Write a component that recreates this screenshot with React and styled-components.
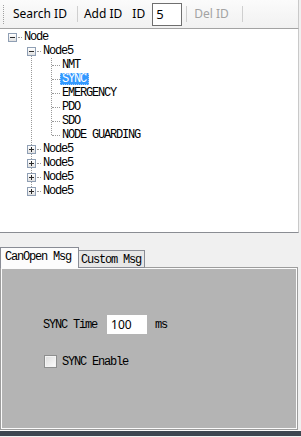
import React from 'react';
import styled, { createGlobalStyle } from 'styled-components';

const GlobalStyle = createGlobalStyle`
  html, body {
    margin: 0;
    padding: 0;
    background: #f0f0f0;
  }
  * {
    box-sizing: border-box;
  }
`;

const mono = `"Liberation Mono", "DejaVu Sans Mono", monospace`;
const ui = `"Noto Sans", "Liberation Sans", sans-serif`;

const Window = styled.div`
  width: 301px;
  height: 437px;
  display: flex;
  flex-direction: column;
  background: #f0f0f0;
  overflow: hidden;
`;

const Toolbar = styled.div`
  height: 29px;
  display: flex;
  align-items: center;
  padding-left: 3px;
  background: linear-gradient(#fbfbfb, #f1f1f1);
  border-bottom: 1px solid #a3a3a3;
  border-right: 1px solid #c9c9c9;
  margin-right: 2px;
  font-family: ${ui};
  font-size: 12px;
  color: #000;
`;

const Grip = styled.span`
  width: 1px;
  height: 19px;
  border-left: 1px dotted #a0a0a0;
`;

const ToolButton = styled.span`
  padding: 0 ${p => (p.$wide ? 7 : 6)}px;
  margin-left: ${p => p.$ml || 0}px;
  color: ${p => (p.$disabled ? '#a3a3a3' : '#000')};
  line-height: 20px;
  white-space: nowrap;
`;

const Separator = styled.span`
  width: 1px;
  height: 16px;
  background: #cfcfcf;
  margin: 0 ${p => p.$mr || 0}px 0 ${p => p.$ml || 0}px;
`;

const IdLabel = styled.span`
  margin-left: 4px;
  line-height: 20px;
`;

const IdInput = styled.span`
  width: 30px;
  height: 23px;
  margin-left: 7px;
  border: 1px solid #6f6f6f;
  background: #fff;
  padding-left: 3px;
  line-height: 21px;
  font-size: 13px;
`;

const TreeView = styled.div`
  height: 204px;
  background: #fff;
  border-bottom: 1px solid #8a8d93;
  border-right: 1px solid #c9c9c9;
  margin-right: 2px;
  padding-top: 1px;
  font-family: ${mono};
  font-size: 12px;
  letter-spacing: -1.2px;
  color: #000;
`;

const Branch = styled.div`
  position: relative;
  &::before {
    content: '';
    position: absolute;
    left: ${p => p.$line}px;
    top: ${p => p.$top}px;
    bottom: 7px;
    border-left: 1px dotted #9a9a9a;
  }
`;

const Row = styled.div`
  position: relative;
  height: 14px;
  display: flex;
  align-items: center;
  padding-left: ${p => p.$indent}px;
`;

const ExpanderBox = styled.span`
  position: relative;
  z-index: 1;
  width: 9px;
  height: 9px;
  border: 1px solid #8f9fb4;
  background: linear-gradient(#ffffff, #e1e1e1);
  display: flex;
  align-items: center;
  justify-content: center;
  flex: none;
`;

const Dash = styled.span`
  width: ${p => p.$w}px;
  margin-left: ${p => p.$ml || 0}px;
  height: 0;
  border-top: 1px dotted #9a9a9a;
  flex: none;
`;

const Label = styled.span`
  height: 12px;
  line-height: 12px;
  padding: 0 3px 0 2px;
  white-space: pre;
  background: ${p => (p.$selected ? '#3399ff' : 'transparent')};
  color: ${p => (p.$selected ? '#fff' : '#000')};
  outline: ${p => (p.$selected ? '1px dotted #9ccaff' : 'none')};
  outline-offset: -1px;
`;

const TabArea = styled.div`
  flex: 1;
  display: flex;
  flex-direction: column;
  padding-top: 15px;
`;

const TabStrip = styled.div`
  height: 20px;
  display: flex;
  align-items: flex-end;
  margin-bottom: -1px;
  position: relative;
  z-index: 1;
  font-family: ${mono};
  font-size: 12px;
  letter-spacing: -1.2px;
`;

const Tab = styled.span`
  height: ${p => (p.$selected ? 21 : 18)}px;
  padding: 0 ${p => (p.$selected ? 7 : 3)}px 0 ${p => (p.$selected ? 4 : 2)}px;
  border: 1px solid #898c95;
  border-bottom: ${p => (p.$selected ? 'none' : '1px solid #898c95')};
  margin-left: ${p => (p.$selected ? 0 : -1)}px;
  background: ${p => (p.$selected ? '#fcfcfc' : '#e7e7e7')};
  line-height: ${p => (p.$selected ? 19 : 18)}px;
  white-space: pre;
  color: #000;
`;

const Panel = styled.div`
  height: 163px;
  margin-right: 3px;
  border: 1px solid #9d9d9d;
  box-shadow: inset 0 0 0 1px #fbfbfb;
  background: #b4b4b4;
  padding: 47px 0 0 42px;
  font-family: ${mono};
  font-size: 12px;
  letter-spacing: -1.2px;
  color: #000;
`;

const FieldRow = styled.div`
  display: flex;
  align-items: center;
  height: ${p => p.$h}px;
  margin-top: ${p => p.$mt || 0}px;
  white-space: pre;
`;

const TimeInput = styled.span`
  width: 40px;
  height: 19px;
  margin-left: 10px;
  margin-right: 8px;
  background: #fff;
  padding-left: 4px;
  line-height: 19px;
  font-family: ${ui};
  font-size: 12px;
  letter-spacing: 0;
`;

const CheckBox = styled.span`
  width: 13px;
  height: 13px;
  margin: 0 5px 0 1px;
  border: 1px solid #8e8f8f;
  background: linear-gradient(135deg, #dcdcdc, #fdfdfd);
  box-shadow: inset 0 0 0 1px #f4f4f4;
`;

const BottomGap = styled.div`
  height: 1px;
  background: #fafafa;
`;

const BottomBar = styled.div`
  height: 5px;
  background: #3d4650;
`;

function Expander({ open }) {
  return (
    <ExpanderBox>
      <svg width="7" height="7" viewBox="0 0 7 7" shapeRendering="crispEdges">
        <path d="M1 3.5H6" stroke="#2b2b2b" strokeWidth="1" />
        {!open && <path d="M3.5 1V6" stroke="#2b2b2b" strokeWidth="1" />}
      </svg>
    </ExpanderBox>
  );
}

const leaves = ['NMT', 'SYNC', 'EMERGENCY', 'PDO', 'SDO', 'NODE GUARDING'];

export default function App() {
  return (
    <>
      <GlobalStyle />
      <Window>
        <Toolbar>
          <Grip />
          <ToolButton $ml={3}>Search ID</ToolButton>
          <Separator $ml={4} />
          <ToolButton>Add ID</ToolButton>
          <IdLabel>ID</IdLabel>
          <IdInput>5</IdInput>
          <Separator $ml={4} />
          <ToolButton $wide $disabled>Del ID</ToolButton>
          <Separator $ml={6} />
        </Toolbar>

        <TreeView>
          <Row $indent={8}>
            <Expander open />
            <Dash $w={4} $ml={1} />
            <Label>Node</Label>
          </Row>
          <Branch $line={31} $top={7}>
            <Row $indent={27}>
              <Expander open />
              <Dash $w={4} $ml={1} />
              <Label>Node5</Label>
            </Row>
            <Branch $line={51} $top={0}>
              {leaves.map(name => (
                <Row key={name} $indent={52}>
                  <Dash $w={8} />
                  <Label $selected={name === 'SYNC'}>{name}</Label>
                </Row>
              ))}
            </Branch>
            {[1, 2, 3, 4].map(i => (
              <Row key={i} $indent={27}>
                <Expander />
                <Dash $w={4} $ml={1} />
                <Label>Node5</Label>
              </Row>
            ))}
          </Branch>
        </TreeView>

        <TabArea>
          <TabStrip>
            <Tab $selected>CanOpen Msg</Tab>
            <Tab>Custom Msg</Tab>
          </TabStrip>
          <Panel>
            <FieldRow $h={19}>
              SYNC Time
              <TimeInput>100</TimeInput>
              ms
            </FieldRow>
            <FieldRow $h={13} $mt={21}>
              <CheckBox />
              SYNC Enable
            </FieldRow>
          </Panel>
          <BottomGap />
          <BottomBar />
        </TabArea>
      </Window>
    </>
  );
}
